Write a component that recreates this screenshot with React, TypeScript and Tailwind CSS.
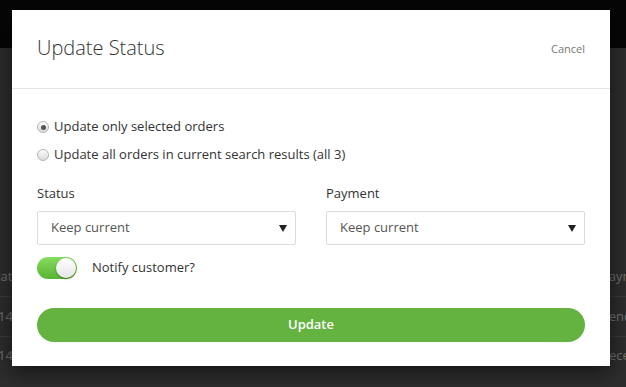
import React, { useState } from 'react';

const font = { fontFamily: '"Open Sans", "Liberation Sans", sans-serif' };

const Radio: React.FC<{ checked: boolean; label: string; onClick: () => void }> = ({ checked, label, onClick }) => (
  <button type="button" onClick={onClick} className="flex items-center h-[20px] gap-[5px] text-left">
    <span className="w-[12px] h-[12px] rounded-full border border-[#b5b5b5] bg-gradient-to-b from-[#fdfdfd] to-[#d9d9d9] flex items-center justify-center">
      {checked && <span className="w-[5px] h-[5px] rounded-full bg-[#555]" />}
    </span>
    <span className="text-[13px] text-[#333]">{label}</span>
  </button>
);

const Select: React.FC<{ label: string }> = ({ label }) => (
  <div>
    <div className="h-[18px] flex items-center text-[13px] text-[#333]">{label}</div>
    <div className="mt-[8px] h-[34px] border border-[#dcdcdc] rounded-[2px] flex items-center justify-between pl-[13px] pr-[8px]">
      <span className="text-[13px] text-[#555]">Keep current</span>
      <svg width="8" height="7" viewBox="0 0 8 7">
        <path d="M0 0 H8 L4 7 Z" fill="#222" />
      </svg>
    </div>
  </div>
);

const BgRow: React.FC<{ left: string; right: string; leftShift: string; h: string; line?: boolean }> = ({ left, right, leftShift, h, line }) => (
  <div className={`${h} flex items-center justify-between ${line ? 'border-b border-[#3a3a3a]' : ''}`}>
    <span className={`${leftShift} whitespace-nowrap`}>{left}</span>
    <span className="w-[25px] whitespace-nowrap">{right}</span>
  </div>
);

const App: React.FC = () => {
  const [scope, setScope] = useState<'selected' | 'all'>('selected');
  const [notify, setNotify] = useState(true);

  return (
    <div className="relative w-[626px] h-[387px] overflow-hidden bg-[#2d2d2d]" style={font}>
      {/* page behind the dialog */}
      <div className="h-[48px] bg-[#060606]" />
      <div className="pt-[210px] text-[13px] text-[#727272]">
        <BgRow left="Date" right="Payment" leftShift="-ml-[9px]" h="h-[39px]" line />
        <BgRow left="14" right="Pending" leftShift="-ml-[2px]" h="h-[40px]" line />
        <BgRow left="14" right="Received" leftShift="-ml-[2px]" h="h-[38px]" />
      </div>

      {/* dialog */}
      <div className="absolute left-[12px] top-[10px] w-[598px] h-[356px] bg-white shadow-[0_5px_20px_rgba(0,0,0,0.6)]">
        <div className="h-[79px] px-[25px] flex items-center justify-between border-b border-[#e5e5e5]">
          <h2 className="text-[20px] font-light text-[#333] -mt-[3px]">Update Status</h2>
          <button type="button" className="text-[11px] text-[#777]">Cancel</button>
        </div>

        <div className="px-[25px] pt-[28px]">
          <Radio checked={scope === 'selected'} label="Update only selected orders" onClick={() => setScope('selected')} />
          <div className="mt-[8px]">
            <Radio checked={scope === 'all'} label="Update all orders in current search results (all 3)" onClick={() => setScope('all')} />
          </div>

          <div className="mt-[20px] grid grid-cols-2 gap-[30px]">
            <Select label="Status" />
            <Select label="Payment" />
          </div>

          <div className="mt-[12px] flex items-center gap-[15px]">
            <button
              type="button"
              onClick={() => setNotify(!notify)}
              className={`w-[40px] h-[22px] rounded-full p-[1px] flex items-center ${notify ? 'justify-end bg-gradient-to-b from-[#86dc5e] to-[#58b434]' : 'justify-start bg-[#ccc]'}`}
            >
              <span className="w-[20px] h-[20px] rounded-full bg-gradient-to-b from-white to-[#e6e6e6] shadow-[0_1px_2px_rgba(0,0,0,0.4)]" />
            </button>
            <span className="text-[13px] text-[#333]">Notify customer?</span>
          </div>

          <button
            type="button"
            className="mt-[29px] w-full h-[34px] rounded-full bg-[#64b23f] text-white text-[13px] font-semibold"
          >
            Update
          </button>
        </div>
      </div>
    </div>
  );
};

export default App;
